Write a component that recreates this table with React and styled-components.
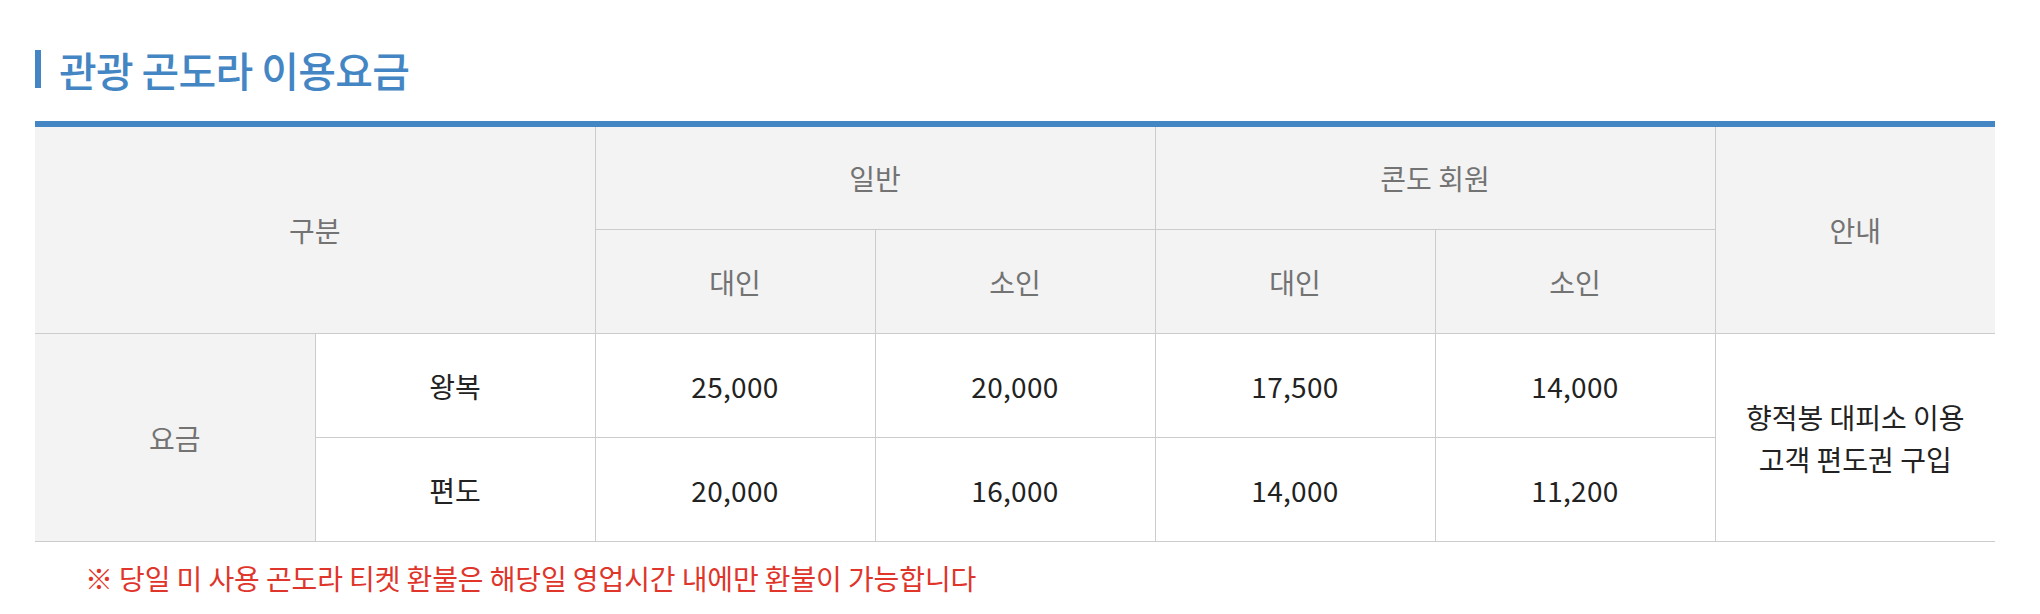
import React from "react";
import styled, { createGlobalStyle } from "styled-components";

const GlobalStyle = createGlobalStyle`
  html, body { margin: 0; padding: 0; background: #ffffff; }
  body { font-family: "Noto Sans CJK KR", "Noto Sans", sans-serif; }
`;

const Page = styled.div`
  padding: 46px 45px 0 35px;
`;

const TitleRow = styled.h2`
  display: flex;
  align-items: center;
  gap: 18px;
  margin: 0 0 29px;
  height: 46px;
`;

const TitleBar = styled.span`
  display: block;
  width: 6px;
  height: 38px;
  background: #4486c4;
`;

const TitleText = styled.span`
  font-size: 41px;
  font-weight: 500;
  color: #4486c4;
  letter-spacing: -0.7px;
  line-height: 46px;
`;

const TableWrap = styled.div`
  width: 1960px;
  border-top: 6px solid #4486c4;
`;

const Table = styled.table`
  width: 100%;
  table-layout: fixed;
  border-collapse: collapse;
  border-spacing: 0;
`;

const Cell = styled.td`
  height: ${(p) => p.$h || 103}px;
  padding: 0;
  border: 1px solid #cccccc;
  border-top: ${(p) => (p.$noTop ? "none" : "1px solid #cccccc")};
  text-align: center;
  vertical-align: middle;
  font-size: 28px;
  line-height: 42px;
  font-weight: 400;
  color: ${(p) => (p.$head ? "#737373" : "#222222")};
  background: ${(p) => (p.$head ? "#f3f3f3" : "#ffffff")};
  letter-spacing: ${(p) => (p.$num ? "0.3px" : "0px")};
  &:first-child { border-left: none; }
  &:last-child { border-right: none; }
`;

const HeadCell = (props) => <Cell as="th" $head {...props} />;

const Notice = styled.p`
  margin: 14px 0 0 50px;
  font-size: 28px;
  line-height: 44px;
  color: #e0352b;
  letter-spacing: -0.1px;
`;

const rows = [
  { label: "왕복", prices: ["25,000", "20,000", "17,500", "14,000"] },
  { label: "편도", prices: ["20,000", "16,000", "14,000", "11,200"] },
];

export default function App() {
  return (
    <>
      <GlobalStyle />
      <Page>
        <TitleRow>
          <TitleBar />
          <TitleText>관광 곤도라 이용요금</TitleText>
        </TitleRow>
        <TableWrap>
          <Table>
            <colgroup>
              {Array.from({ length: 7 }).map((_, i) => (
                <col key={i} style={{ width: "280px" }} />
              ))}
            </colgroup>
            <thead>
              <tr>
                <HeadCell colSpan={2} rowSpan={2} $noTop>구분</HeadCell>
                <HeadCell colSpan={2} $h={102} $noTop>일반</HeadCell>
                <HeadCell colSpan={2} $h={102} $noTop>콘도 회원</HeadCell>
                <HeadCell rowSpan={2} $noTop>안내</HeadCell>
              </tr>
              <tr>
                <HeadCell>대인</HeadCell>
                <HeadCell>소인</HeadCell>
                <HeadCell>대인</HeadCell>
                <HeadCell>소인</HeadCell>
              </tr>
            </thead>
            <tbody>
              {rows.map((r, i) => (
                <tr key={r.label}>
                  {i === 0 && <HeadCell rowSpan={2}>요금</HeadCell>}
                  <Cell>{r.label}</Cell>
                  {r.prices.map((p, j) => (
                    <Cell key={j} $num>{p}</Cell>
                  ))}
                  {i === 0 && (
                    <Cell rowSpan={2}>
                      향적봉 대피소 이용
                      <br />
                      고객 편도권 구입
                    </Cell>
                  )}
                </tr>
              ))}
            </tbody>
          </Table>
        </TableWrap>
        <Notice>※ 당일 미 사용 곤도라 티켓 환불은 해당일 영업시간 내에만 환불이 가능합니다</Notice>
      </Page>
    </>
  );
}
